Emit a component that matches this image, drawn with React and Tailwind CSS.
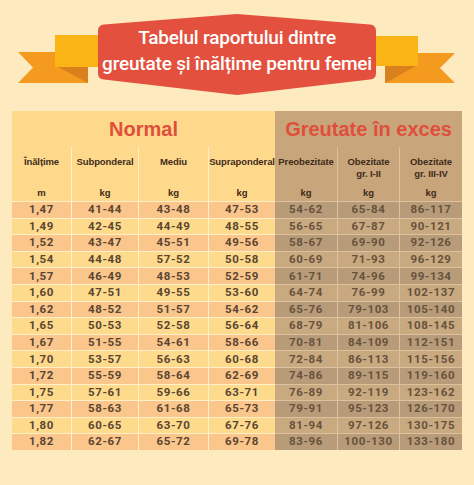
import React from "react";

const rows = [
  ["1,47", "41-44", "43-48", "47-53", "54-62", "65-84", "86-117"],
  ["1,49", "42-45", "44-49", "48-55", "56-65", "67-87", "90-121"],
  ["1,52", "43-47", "45-51", "49-56", "58-67", "69-90", "92-126"],
  ["1,54", "44-48", "57-52", "50-58", "60-69", "71-93", "96-129"],
  ["1,57", "46-49", "48-53", "52-59", "61-71", "74-96", "99-134"],
  ["1,60", "47-51", "49-55", "53-60", "64-74", "76-99", "102-137"],
  ["1,62", "48-52", "51-57", "54-62", "65-76", "79-103", "105-140"],
  ["1,65", "50-53", "52-58", "56-64", "68-79", "81-106", "108-145"],
  ["1,67", "51-55", "54-61", "58-66", "70-81", "84-109", "112-151"],
  ["1,70", "53-57", "56-63", "60-68", "72-84", "86-113", "115-156"],
  ["1,72", "55-59", "58-64", "62-69", "74-86", "89-115", "119-160"],
  ["1,75", "57-61", "59-66", "63-71", "76-89", "92-119", "123-162"],
  ["1,77", "58-63", "61-68", "65-73", "79-91", "95-123", "126-170"],
  ["1,80", "60-65", "63-70", "67-76", "81-94", "97-126", "130-175"],
  ["1,82", "62-67", "65-72", "69-78", "83-96", "100-130", "133-180"],
];

function Banner() {
  return (
    <div className="relative h-[111px] w-full">
      <svg width="474" height="111" viewBox="0 0 474 111" className="absolute left-0 top-0">
        <polygon points="18,52 88,52 88,83 18,83 33,67.5" fill="#f39a1f" />
        <polygon points="385,53 455,53 440,68 455,83 385,83" fill="#f39a1f" />
        <rect x="55" y="35" width="45" height="32" fill="#fbb415" />
        <rect x="374" y="36" width="44" height="30" fill="#fbb415" />
        <polygon points="58,67 88,67 88,83" fill="#d9811c" />
        <polygon points="385,66 416,66 385,83" fill="#d9811c" />
        <path
          d="M98,31 Q98,25 104,24.5 L237,14 L370,24.5 Q376,25 376,31 L376,73 Q376,79 370,79.5 L237,95 L104,79.5 Q98,79 98,73 Z"
          fill="#e3503d"
        />
      </svg>
      <div className="absolute left-[98px] top-[25px] flex w-[278px] flex-col items-center text-white font-['Roboto',sans-serif] font-medium text-[19px] leading-[26px] tracking-[-0.2px]">
        <span>Tabelul raportului dintre</span>
        <span>greutate și înălțime pentru femei</span>
      </div>
    </div>
  );
}

export default function App() {
  const head = "font-['Liberation_Sans',Arial,sans-serif] font-bold text-[9.5px] tracking-[-0.1px] leading-[12px] text-[#3f2c1a] text-center whitespace-nowrap";
  const num = "font-['Roboto',sans-serif] font-bold text-[11.5px] tracking-[0.6px] text-center flex items-center justify-center";
  return (
    <div className="w-[474px] h-[485px] bg-[#fdeabf] overflow-hidden">
      <Banner />
      <div className="ml-[12px] w-[450px] grid grid-cols-[59px_67px_70px_67px_62px_62px_63px]">
        {/* titles */}
        <div className="col-span-4 h-[36px] bg-[#fed98c] flex items-center justify-center font-['Liberation_Sans',Arial,sans-serif] font-bold text-[20px] text-[#e04f3b]">
          Normal
        </div>
        <div className="col-span-3 h-[36px] bg-[#c8a57b] flex items-center justify-center font-['Liberation_Sans',Arial,sans-serif] font-bold text-[20px] text-[#e04f3b]">
          Greutate în exces
        </div>
        {/* header names */}
        {["Înălțime", "Subponderal", "Mediu", "Supraponderal"].map((t, i) => (
          <div key={t} className={`h-[36px] bg-[#fed98c] pt-[9px] ${head} ${i > 0 ? "border-l border-[#fff0c8]" : ""}`}>
            {t}
          </div>
        ))}
        {[["Preobezitate"], ["Obezitate", "gr. I-II"], ["Obezitate", "gr. III-IV"]].map((t, i) => (
          <div key={i} className={`h-[36px] bg-[#c8a57b] pt-[9px] ${head} ${i > 0 ? "border-l border-[#dcc29e]" : ""}`}>
            {t.map((l) => (
              <div key={l}>{l}</div>
            ))}
          </div>
        ))}
        {/* units */}
        {["m", "kg", "kg", "kg"].map((t, i) => (
          <div key={"u" + i} className={`h-[18px] pt-[2px] bg-[#fed98c] flex items-center justify-center ${head} ${i > 0 ? "border-l border-[#fff0c8]" : ""}`}>
            {t}
          </div>
        ))}
        {["kg", "kg", "kg"].map((t, i) => (
          <div key={"v" + i} className={`h-[18px] pt-[2px] bg-[#c8a57b] flex items-center justify-center ${head} ${i > 0 ? "border-l border-[#dcc29e]" : ""}`}>
            {t}
          </div>
        ))}
        {/* data */}
        {rows.map((r, ri) => {
          const odd = ri % 2 === 0;
          return r.map((v, ci) => {
            const left = ci < 4;
            const bg = left
              ? odd
                ? "bg-[#fbc68b]"
                : "bg-[#fedb8c]"
              : odd
              ? "bg-[#b89c79]"
              : "bg-[#c9a980]";
            const color = left ? "text-[#5a4532]" : "text-[#67523d]";
            const bl =
              ci === 0 || ci === 4
                ? ""
                : left
                ? "border-l border-[#fff0c8]"
                : "border-l border-[#dcc29e]";
            const bt = left ? "border-t border-[#fff0c8]" : "border-t border-[#dcc29e]";
            return (
              <div key={ri + "-" + ci} className={`h-[16.6px] ${bg} ${color} ${bl} ${bt} ${num}`}>
                {v}
              </div>
            );
          });
        })}
      </div>
    </div>
  );
}
